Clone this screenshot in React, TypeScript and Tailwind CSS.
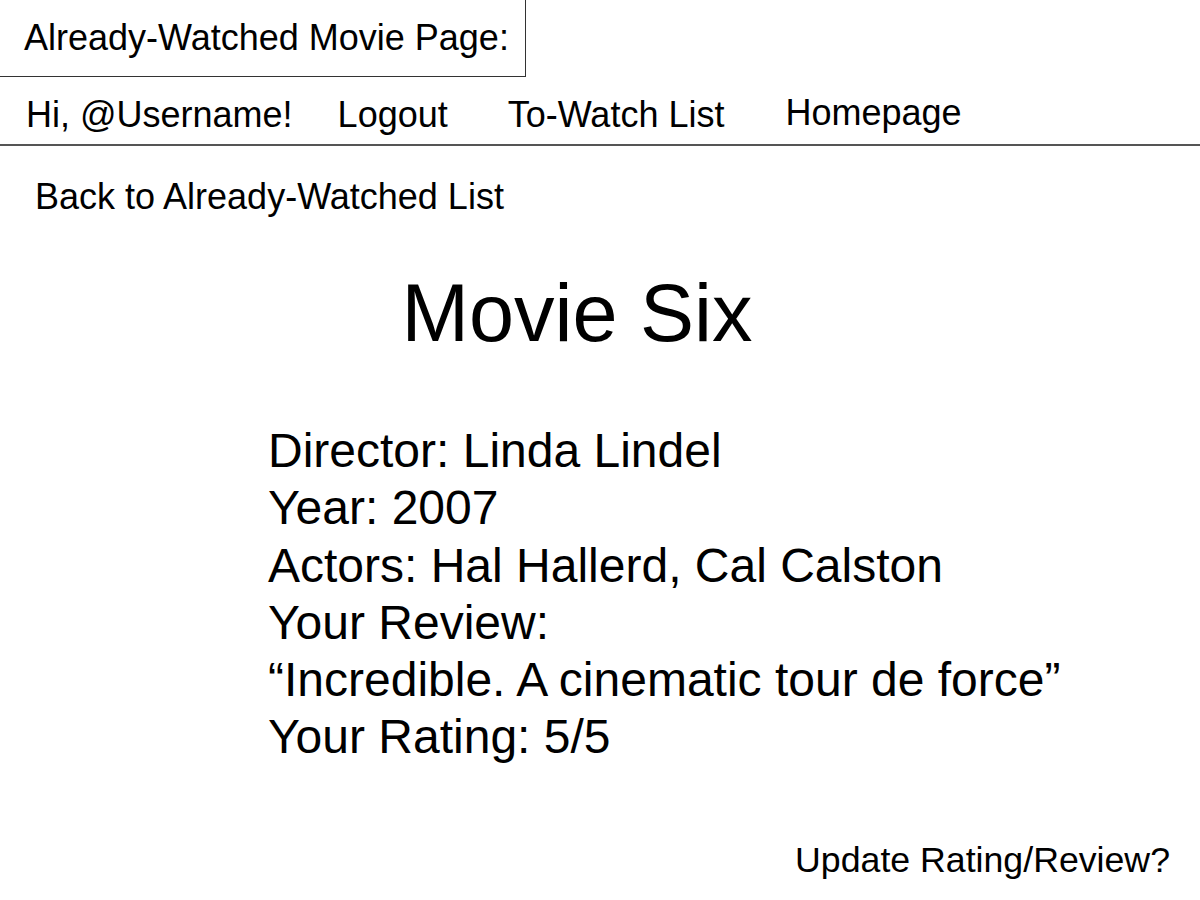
import React from "react";

const App = () => {
  return (
    <div className="w-[1200px] h-[900px] bg-white text-black font-['Liberation_Sans',Arial,sans-serif] flex flex-col">
      {/* Page label */}
      <div className="w-[526px] h-[77px] border-r border-b border-[#333] flex items-center pl-[24px]">
        <span className="text-[36px] leading-none">Already-Watched Movie Page:</span>
      </div>

      {/* Nav */}
      <nav className="h-[69px] flex items-center pt-[8px] border-b-2 border-[#555] text-[36px] leading-none">
        <span className="ml-[26px]">Hi, @Username!</span>
        <span className="ml-[45px]">Logout</span>
        <span className="ml-[60px]">To-Watch List</span>
        <span className="ml-[61px] -mt-[3px]">Homepage</span>
      </nav>

      <a className="ml-[35px] mt-[33px] text-[36px] leading-none">Back to Already-Watched List</a>

      <h1 className="mt-[58px] text-center pr-[46px] text-[81px] leading-none">Movie Six</h1>

      {/* Details */}
      <div className="mt-[68px] ml-[268px] text-[48px] leading-[57.3px]">
        <p>Director: Linda Lindel</p>
        <p>Year: 2007</p>
        <p>Actors: Hal Hallerd, Cal Calston</p>
        <p>Your Review:</p>
        <p>“Incredible. A cinematic tour de force”</p>
        <p>Your Rating: 5/5</p>
      </div>

      <div className="mt-auto mb-[21px] self-end mr-[30px] text-[35.7px] leading-none">Update Rating/Review?</div>
    </div>
  );
};

export default App;
